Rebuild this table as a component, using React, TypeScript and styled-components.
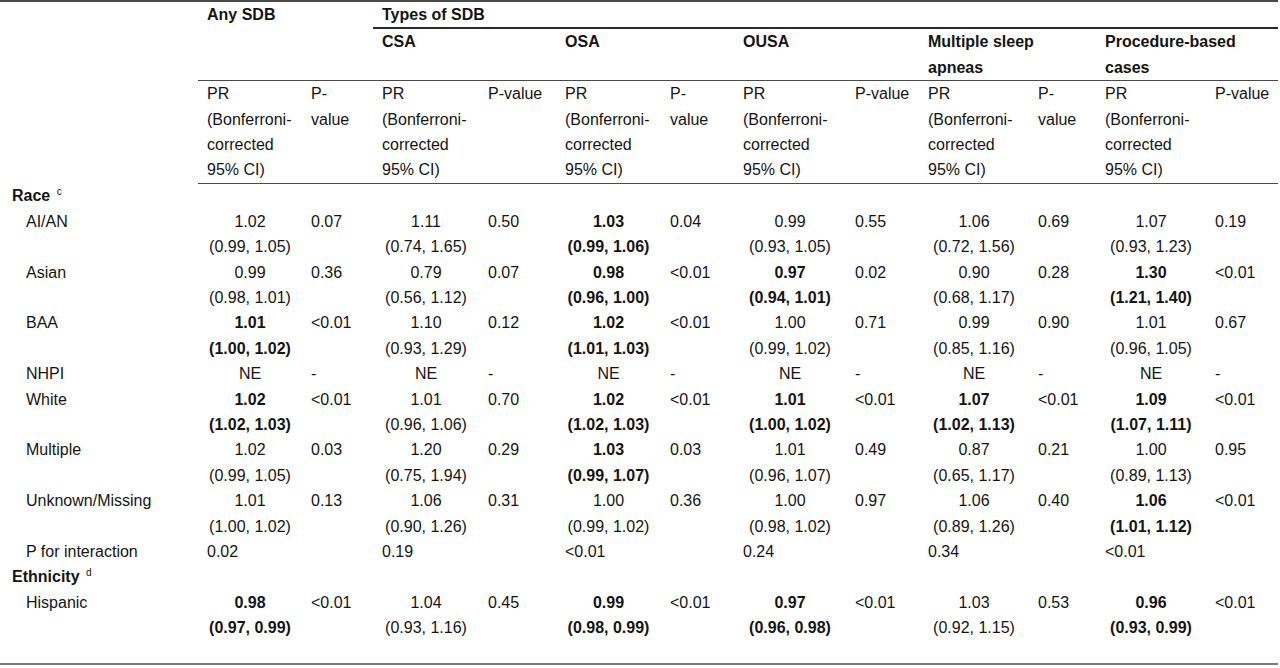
import { Fragment } from "react";
import styled, { createGlobalStyle } from "styled-components";

type Estimate = {
  pr: string;
  ci?: string;
  p: string;
  bold?: boolean;
};

type Row =
  | { kind: "group"; label: string; note: string }
  | { kind: "data"; label: string; cells: Estimate[] }
  | { kind: "interaction"; label: string; values: string[] };

const GlobalStyle = createGlobalStyle`
  html, body {
    margin: 0;
    padding: 0;
    background: #fff;
  }
  body {
    font-family: "Liberation Sans", Arial, sans-serif;
    color: #141414;
  }
`;

const Table = styled.table`
  width: 1278px;
  border-collapse: collapse;
  table-layout: fixed;
  border-top: 2px solid #4a4a4a;
  border-bottom: 2px solid #7a7a7a;
  font-size: 16px;
  line-height: 25.4px;
`;

const HeadCell = styled.th<{ $rule?: "thick" | "thin" }>`
  padding: 0 9px;
  text-align: left;
  vertical-align: top;
  white-space: nowrap;
  font-weight: ${({ $rule }) => ($rule === "thin" ? 400 : 700)};
  border-bottom: ${({ $rule }) =>
    $rule === "thick"
      ? "2px solid #2a2a2a"
      : $rule === "thin"
        ? "1px solid #4a4a4a"
        : "none"};
`;

const GroupHead = styled(HeadCell)`
  border-bottom: 1px solid #4a4a4a;
`;

const LabelCell = styled.td<{ $group?: boolean }>`
  padding: 0 0 0 ${({ $group }) => ($group ? "12px" : "26px")};
  vertical-align: top;
  white-space: nowrap;
  font-weight: ${({ $group }) => ($group ? 700 : 400)};
`;

const Note = styled.sup`
  font-size: 10px;
  font-weight: 400;
  vertical-align: 6px;
  line-height: 0;
  margin-left: 2px;
`;

const PrCell = styled.td<{ $bold?: boolean; $left?: boolean }>`
  padding: 0 9px;
  vertical-align: top;
  white-space: nowrap;
  text-align: ${({ $left }) => ($left ? "left" : "center")};
  font-weight: ${({ $bold }) => ($bold ? 700 : 400)};
`;

const PCell = styled.td`
  padding: 0 9px;
  vertical-align: top;
  white-space: nowrap;
  text-align: left;
`;

const Line = styled.div``;

const Spacer = styled.tr`
  height: 23px;
`;

const colWidths = [198, 104, 71, 106, 77, 105, 73, 112, 73, 110, 67, 110, 72];

const types: { name: string[]; pHead: string[] }[] = [
  { name: ["CSA"], pHead: ["P-value"] },
  { name: ["OSA"], pHead: ["P-", "value"] },
  { name: ["OUSA"], pHead: ["P-value"] },
  { name: ["Multiple sleep", "apneas"], pHead: ["P-", "value"] },
  { name: ["Procedure-based", "cases"], pHead: ["P-value"] },
];

const prHead = ["PR", "(Bonferroni-", "corrected", "95% CI)"];

const e = (pr: string, ci: string, p: string, bold = false): Estimate => ({
  pr,
  ci,
  p,
  bold,
});
const ne: Estimate = { pr: "NE", p: "-" };

const rows: Row[] = [
  { kind: "group", label: "Race", note: "c" },
  {
    kind: "data",
    label: "AI/AN",
    cells: [
      e("1.02", "(0.99, 1.05)", "0.07"),
      e("1.11", "(0.74, 1.65)", "0.50"),
      e("1.03", "(0.99, 1.06)", "0.04", true),
      e("0.99", "(0.93, 1.05)", "0.55"),
      e("1.06", "(0.72, 1.56)", "0.69"),
      e("1.07", "(0.93, 1.23)", "0.19"),
    ],
  },
  {
    kind: "data",
    label: "Asian",
    cells: [
      e("0.99", "(0.98, 1.01)", "0.36"),
      e("0.79", "(0.56, 1.12)", "0.07"),
      e("0.98", "(0.96, 1.00)", "<0.01", true),
      e("0.97", "(0.94, 1.01)", "0.02", true),
      e("0.90", "(0.68, 1.17)", "0.28"),
      e("1.30", "(1.21, 1.40)", "<0.01", true),
    ],
  },
  {
    kind: "data",
    label: "BAA",
    cells: [
      e("1.01", "(1.00, 1.02)", "<0.01", true),
      e("1.10", "(0.93, 1.29)", "0.12"),
      e("1.02", "(1.01, 1.03)", "<0.01", true),
      e("1.00", "(0.99, 1.02)", "0.71"),
      e("0.99", "(0.85, 1.16)", "0.90"),
      e("1.01", "(0.96, 1.05)", "0.67"),
    ],
  },
  { kind: "data", label: "NHPI", cells: [ne, ne, ne, ne, ne, ne] },
  {
    kind: "data",
    label: "White",
    cells: [
      e("1.02", "(1.02, 1.03)", "<0.01", true),
      e("1.01", "(0.96, 1.06)", "0.70"),
      e("1.02", "(1.02, 1.03)", "<0.01", true),
      e("1.01", "(1.00, 1.02)", "<0.01", true),
      e("1.07", "(1.02, 1.13)", "<0.01", true),
      e("1.09", "(1.07, 1.11)", "<0.01", true),
    ],
  },
  {
    kind: "data",
    label: "Multiple",
    cells: [
      e("1.02", "(0.99, 1.05)", "0.03"),
      e("1.20", "(0.75, 1.94)", "0.29"),
      e("1.03", "(0.99, 1.07)", "0.03", true),
      e("1.01", "(0.96, 1.07)", "0.49"),
      e("0.87", "(0.65, 1.17)", "0.21"),
      e("1.00", "(0.89, 1.13)", "0.95"),
    ],
  },
  {
    kind: "data",
    label: "Unknown/Missing",
    cells: [
      e("1.01", "(1.00, 1.02)", "0.13"),
      e("1.06", "(0.90, 1.26)", "0.31"),
      e("1.00", "(0.99, 1.02)", "0.36"),
      e("1.00", "(0.98, 1.02)", "0.97"),
      e("1.06", "(0.89, 1.26)", "0.40"),
      e("1.06", "(1.01, 1.12)", "<0.01", true),
    ],
  },
  {
    kind: "interaction",
    label: "P for interaction",
    values: ["0.02", "0.19", "<0.01", "0.24", "0.34", "<0.01"],
  },
  { kind: "group", label: "Ethnicity", note: "d" },
  {
    kind: "data",
    label: "Hispanic",
    cells: [
      e("0.98", "(0.97, 0.99)", "<0.01", true),
      e("1.04", "(0.93, 1.16)", "0.45"),
      e("0.99", "(0.98, 0.99)", "<0.01", true),
      e("0.97", "(0.96, 0.98)", "<0.01", true),
      e("1.03", "(0.92, 1.15)", "0.53"),
      e("0.96", "(0.93, 0.99)", "<0.01", true),
    ],
  },
];

function Lines({ parts }: { parts: string[] }) {
  return (
    <>
      {parts.map((t) => (
        <Line key={t}>{t}</Line>
      ))}
    </>
  );
}

function BodyRow({ row }: { row: Row }) {
  if (row.kind === "group") {
    return (
      <tr>
        <LabelCell $group>
          {row.label} <Note>{row.note}</Note>
        </LabelCell>
        <td colSpan={12} />
      </tr>
    );
  }
  if (row.kind === "interaction") {
    return (
      <tr>
        <LabelCell>{row.label}</LabelCell>
        {row.values.map((v, i) => (
          <Fragment key={i}>
            <PrCell $left>{v}</PrCell>
            <PCell />
          </Fragment>
        ))}
      </tr>
    );
  }
  return (
    <tr>
      <LabelCell>{row.label}</LabelCell>
      {row.cells.map((c, i) => (
        <Fragment key={i}>
          <PrCell $bold={c.bold}>
            <Line>{c.pr}</Line>
            {c.ci ? <Line>{c.ci}</Line> : null}
          </PrCell>
          <PCell>{c.p}</PCell>
        </Fragment>
      ))}
    </tr>
  );
}

export default function App() {
  return (
    <>
      <GlobalStyle />
      <Table>
        <colgroup>
          {colWidths.map((w, i) => (
            <col key={i} style={{ width: w }} />
          ))}
        </colgroup>
        <thead>
          <tr>
            <HeadCell rowSpan={3} />
            <GroupHead colSpan={2} rowSpan={2}>
              Any SDB
            </GroupHead>
            <HeadCell colSpan={10} $rule="thick">
              Types of SDB
            </HeadCell>
          </tr>
          <tr>
            {types.map((t) => (
              <GroupHead key={t.name[0]} colSpan={2}>
                <Lines parts={t.name} />
              </GroupHead>
            ))}
          </tr>
          <tr>
            <HeadCell $rule="thin">
              <Lines parts={prHead} />
            </HeadCell>
            <HeadCell $rule="thin">
              <Lines parts={["P-", "value"]} />
            </HeadCell>
            {types.map((t) => (
              <Fragment key={t.name[0]}>
                <HeadCell $rule="thin">
                  <Lines parts={prHead} />
                </HeadCell>
                <HeadCell $rule="thin">
                  <Lines parts={t.pHead} />
                </HeadCell>
              </Fragment>
            ))}
          </tr>
        </thead>
        <tbody>
          {rows.map((r) => (
            <BodyRow key={r.label} row={r} />
          ))}
          <Spacer>
            <td colSpan={13} />
          </Spacer>
        </tbody>
      </Table>
    </>
  );
}
